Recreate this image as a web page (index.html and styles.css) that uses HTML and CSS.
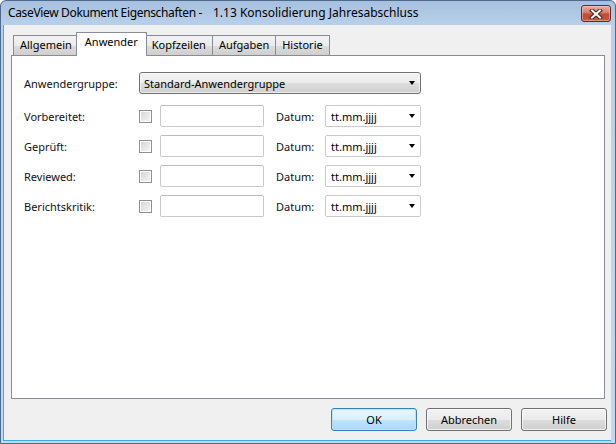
FILE: index.html
```html
<!DOCTYPE html>
<html>
<head>
<meta charset="utf-8">
<link rel="stylesheet" href="styles.css">
</head>
<body>
<div class="window">
  <div class="titlebar">
    <div class="title"><span class="title-main">CaseView Dokument Eigenschaften -</span><span class="title-sub">1.13 Konsolidierung Jahresabschluss</span></div>
    <div class="close">
      <svg width="16" height="10" viewBox="0 0 16 10">
        <path d="M4 1.5 L12 8.5 M12 1.5 L4 8.5" stroke="#3a2a2a" stroke-width="4" stroke-linecap="square"/>
        <path d="M4 1.5 L12 8.5 M12 1.5 L4 8.5" stroke="#ffffff" stroke-width="2" stroke-linecap="square"/>
      </svg>
    </div>
  </div>
  <div class="client">
    <div class="tabs">
      <div class="tab">Allgemein</div>
      <div class="tab active">Anwender</div>
      <div class="tab">Kopfzeilen</div>
      <div class="tab">Aufgaben</div>
      <div class="tab">Historie</div>
    </div>
    <div class="panel">
      <div class="form">
        <div class="label lbl-group">Anwendergruppe:</div>
        <div class="combo-btn">
          <span>Standard-Anwendergruppe</span>
          <span class="arrow"></span>
        </div>

        <div class="label">Vorbereitet:</div>
        <div class="cell"><span class="check"></span></div>
        <div class="cell"><span class="input"></span></div>
        <div class="label">Datum:</div>
        <div class="date"><span>tt.mm.jjjj</span><span class="arrow"></span></div>

        <div class="label">Geprüft:</div>
        <div class="cell"><span class="check"></span></div>
        <div class="cell"><span class="input"></span></div>
        <div class="label">Datum:</div>
        <div class="date"><span>tt.mm.jjjj</span><span class="arrow"></span></div>

        <div class="label">Reviewed:</div>
        <div class="cell"><span class="check"></span></div>
        <div class="cell"><span class="input"></span></div>
        <div class="label">Datum:</div>
        <div class="date"><span>tt.mm.jjjj</span><span class="arrow"></span></div>

        <div class="label">Berichtskritik:</div>
        <div class="cell"><span class="check"></span></div>
        <div class="cell"><span class="input"></span></div>
        <div class="label">Datum:</div>
        <div class="date"><span>tt.mm.jjjj</span><span class="arrow"></span></div>
      </div>
    </div>
    <div class="buttons">
      <div class="btn default">OK</div>
      <div class="btn">Abbrechen</div>
      <div class="btn">Hilfe</div>
    </div>
  </div>
</div>
</body>
</html>
```
FILE: styles.css
```css
* { box-sizing: border-box; }
html, body { margin: 0; padding: 0; }
body {
  width: 616px;
  height: 444px;
  overflow: hidden;
  font-family: "Noto Sans", "Open Sans", sans-serif;
  font-size: 11px;
  color: #000;
  background: #fff;
}
.window {
  width: 616px;
  height: 444px;
  display: flex;
  flex-direction: column;
  border: 1px solid #4e6a8c;
  border-radius: 6px 6px 0 0;
  background: linear-gradient(to bottom, #a6c0de 0px, #b9d0ea 24px, #c3d8ee 100%);
}
.titlebar {
  height: 24px;
  flex: none;
  display: flex;
  align-items: flex-start;
  justify-content: space-between;
  padding: 0 4px 0 7px;
}
.title {
  padding-top: 5px;
  line-height: 14px;
  font-size: 12px;
  white-space: nowrap;
}
.title-main { letter-spacing: -0.35px; }
.title-sub { margin-left: 11px; }
.close {
  width: 30px;
  height: 17px;
  margin-top: 4px;
  border: 1px solid #5e2a2a;
  border-radius: 3px;
  background: linear-gradient(to bottom, #e8b0a4 0%, #d77a66 45%, #c34a33 55%, #c6553c 100%);
  box-shadow: inset 0 0 0 1px rgba(255,220,210,0.45);
  display: flex;
  align-items: center;
  justify-content: center;
}
.client {
  flex: 1;
  margin: 0 4px 2px 2px;
  background: #f0f0f0;
  border-left: 1px solid #36b1df;
  border-bottom: 1px solid #36b1df;
  display: flex;
  flex-direction: column;
  padding: 7px 0 0 7px;
}
.tabs {
  display: flex;
  align-items: flex-end;
  height: 23px;
  padding-left: 2px;
  position: relative;
  z-index: 1;
}
.tab {
  height: 20px;
  padding: 0 6px;
  line-height: 18px;
  border: 1px solid #898c95;
  border-bottom: none;
  margin-left: -1px;
  background: linear-gradient(to bottom, #f2f2f2 0%, #ebebeb 50%, #dddddd 51%, #cfcfcf 100%);
  white-space: nowrap;
}
.tab:first-child { margin-left: 0; }
.tab.active {
  height: 24px;
  margin: 0 -2px -1px -3px;
  padding: 0 8px;
  line-height: 17px;
  background: #fff;
  position: relative;
  z-index: 2;
}
.tab.active + .tab { margin-left: 0; }
.panel {
  width: 594px;
  height: 344px;
  border: 1px solid #898c95;
  background: #fff;
  padding: 16px 0 0 12px;
}
.form {
  display: grid;
  grid-template-columns: 115px 21px 116px 49px 96px;
  grid-template-rows: 25px;
  grid-auto-rows: 22px;
  row-gap: 8px;
}
.label {
  display: flex;
  align-items: center;
  white-space: nowrap;
  color: #101020;
}
.lbl-group { height: 22px; }
.combo-btn {
  grid-column: 2 / 6;
  height: 22px;
  border: 1px solid #707070;
  border-radius: 3px;
  background: linear-gradient(to bottom, #f2f2f2 0%, #ebebeb 50%, #dddddd 51%, #cfcfcf 100%);
  box-shadow: inset 0 0 0 1px rgba(255,255,255,0.6);
  display: flex;
  align-items: center;
  justify-content: space-between;
  padding: 0 5px 0 4px;
}
.cell { display: flex; align-items: center; }
.check {
  width: 13px;
  height: 13px;
  border: 1px solid #8f8f8f;
  box-shadow: inset 0 0 0 1px #fff;
  background: linear-gradient(135deg, #d4d4d4 0%, #f7f7f7 100%);
}
.input {
  width: 104px;
  height: 22px;
  border: 1px solid #c8cacf;
  border-top-color: #b8bbc2;
  border-radius: 2px;
  background: #fff;
}
.date {
  height: 22px;
  border: 1px solid #c8cacf;
  border-radius: 2px;
  background: #fff;
  display: flex;
  align-items: center;
  justify-content: space-between;
  padding: 0 5px 0 5px;
}
.arrow {
  width: 0;
  height: 0;
  border-left: 3.5px solid transparent;
  border-right: 3.5px solid transparent;
  border-top: 4px solid #000;
}
.buttons {
  display: flex;
  justify-content: flex-end;
  gap: 9px;
  padding: 9px 4px 0 0;
}
.btn {
  width: 86px;
  height: 23px;
  border: 1px solid #707070;
  border-radius: 3px;
  background: linear-gradient(to bottom, #f2f2f2 0%, #ebebeb 50%, #dddddd 51%, #cfcfcf 100%);
  box-shadow: inset 0 0 0 1px rgba(255,255,255,0.7);
  display: flex;
  align-items: center;
  justify-content: center;
  color: #000;
}
.btn.default {
  border-color: #3c7fb1;
  background: linear-gradient(to bottom, #eaf6fd 0%, #d9f0fc 50%, #bee6fd 51%, #a7d9f5 100%);
  box-shadow: inset 0 0 0 1px #b3e6ff;
}
```
